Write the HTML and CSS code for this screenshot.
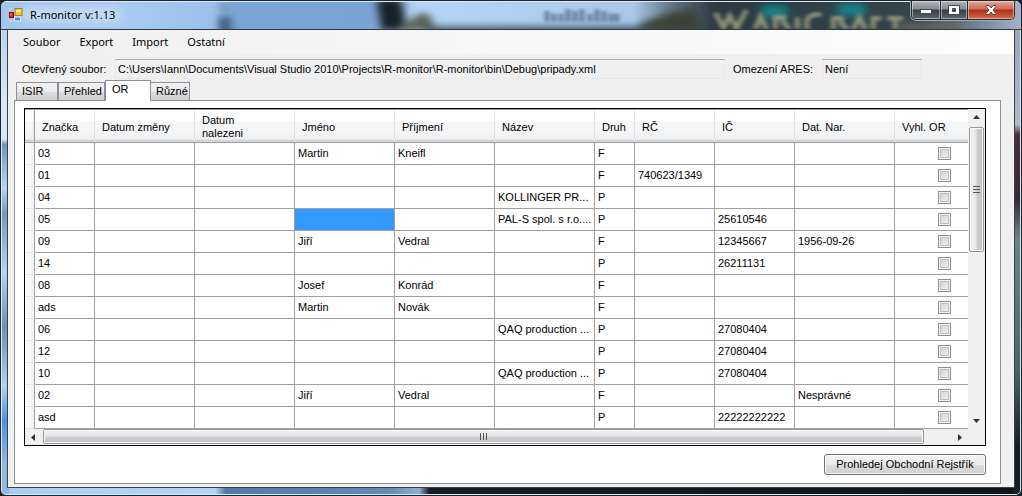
FILE: index.html
```html
<!DOCTYPE html>
<html lang="cs">
<head>
<meta charset="utf-8">
<title>R-monitor v:1.13</title>
<link rel="stylesheet" href="styles.css">
</head>
<body>
<div class="window">
  <header class="titlebar">
    <svg class="backdrop" viewBox="0 0 1022 30" preserveAspectRatio="none" aria-hidden="true">
      <defs>
        <linearGradient id="sky" x1="0" x2="1" y1="0" y2="0">
          <stop offset="0" stop-color="#a3c6ed"/><stop offset=".12" stop-color="#a9cbf0"/>
          <stop offset=".21" stop-color="#9cc0ea"/><stop offset=".23" stop-color="#7ba5d5"/>
          <stop offset=".36" stop-color="#78a3d3"/><stop offset=".41" stop-color="#b5d6f8"/>
          <stop offset=".62" stop-color="#a9c8e8"/><stop offset=".66" stop-color="#5c7080"/>
          <stop offset=".7" stop-color="#2c3b42"/><stop offset=".9" stop-color="#34454c"/>
          <stop offset=".97" stop-color="#8291a4"/><stop offset="1" stop-color="#a5b4c8"/>
        </linearGradient>
        <filter id="soft" x="-20%" y="-80%" width="140%" height="260%"><feGaussianBlur stdDeviation="4"/></filter>
        <filter id="haze" x="-20%" y="-80%" width="140%" height="260%"><feGaussianBlur stdDeviation="2"/></filter>
      </defs>
      <rect width="1022" height="30" fill="url(#sky)"/>
      <g filter="url(#soft)">
        <rect x="20" y="6" width="100" height="16" rx="8" fill="#c4dbf3"/>
        <rect x="218" y="16" width="13" height="20" fill="#3d5c81"/>
        <rect x="220" y="2" width="8" height="8" fill="#6488b0"/>
        <path d="M376 -4h25l6 36h-26z" fill="#16232c"/>
        <path d="M396 32l24-20 9 2 8 18z" fill="#5a6355"/>
        <path d="M425 27h235v8H425z" fill="#3c5163"/>
        <path d="M640 24l30-12 26-4 8 26h-64z" fill="#3c4238"/>
        <path d="M762 4h26v14h-26zM838 2h28v14h-28z" fill="#138088"/>
        <path d="M900 24h60v8h-60z" fill="#6c675c"/>
      </g>
      <path d="M547 10v12M554 13v9M561 13v9M568 8v14M575 10v12M582 8v14M590 13v9M597 8v14M604 10v12M611 13v9M617 13v9" stroke="#435a73" stroke-width="4" opacity=".8" filter="url(#haze)"/>
      <g fill="none" stroke="#a6a583" stroke-width="5" opacity=".8" filter="url(#haze)">
        <path d="M716 12l8 17 6-14 7 14 10-20M756 30l5-14 6 14M776 30v-13h8v6l6 7M798 30V17M822 14q-18-2-14 16M834 30v-12h8v6l6 6M854 30l6-13 6 13M874 30v-12h8M888 18h16M896 18v12"/>
      </g>
    </svg>
    <svg class="app-icon" viewBox="0 0 14 14" aria-hidden="true">
      <path d="M0 3V0h3M0 11v2h3" fill="none" stroke="#d9dfe6"/>
      <rect x="6" y=".5" width="7" height="7" fill="#f6c52d" stroke="#b77a10"/>
      <path d="M7 2h5v2H7z" fill="#fff0a0"/>
      <rect x=".5" y="4.500" width="4" height="5" fill="#d92b18" stroke="#8b1109"/>
      <path d="M1.500 5.500h1v2h-1z" fill="#ff9b8c"/>
      <rect x="5.500" y="9" width="6" height="4" fill="#438ee8" stroke="#e6f0fa"/>
    </svg>
    <h1 class="title">R-monitor v:1.13</h1>
    <div class="caption-buttons">
      <button class="caption" aria-label="Minimalizovat"><svg viewBox="0 0 14 12"><rect x="1.500" y="5.500" width="11" height="4" fill="#fff" stroke="#444b55"/></svg></button>
      <button class="caption maximize" aria-label="Maximalizovat"><svg viewBox="0 0 14 12"><path fill-rule="evenodd" d="M1.500 1.500h11v9h-11zM5.500 4.500h3v3h-3z" fill="#fff" stroke="#444b55"/></svg></button>
      <button class="caption close" aria-label="Zavřít"><svg viewBox="0 0 14 12"><path d="M2 1.500h3l2 2.500 2-2.500h3l.5.5-3.500 4 3.500 4-.5.500h-3L7 8l-2 2.500H2l-.5-.5L5 6 1.500 2z" fill="#fff" stroke="#5d4346"/></svg></button>
    </div>
  </header>

  <main class="client">
    <nav class="menu">
      <button>Soubor</button><button>Export</button><button>Import</button><button>Ostatní</button>
    </nav>
    <div class="fields">
      <label for="file">Otevřený soubor:</label>
      <input id="file" class="file" readonly value="C:\Users\Iann\Documents\Visual Studio 2010\Projects\R-monitor\R-monitor\bin\Debug\pripady.xml">
      <label for="ares">Omezení ARES:</label>
      <input id="ares" class="ares" readonly value="Není">
    </div>
    <div class="tabs" role="tablist">
      <button class="tab isir" role="tab">ISIR</button>
      <button class="tab prehled" role="tab">Přehled</button>
      <button class="tab active" role="tab" aria-selected="true">OR</button>
      <button class="tab ruzne" role="tab">Různé</button>
    </div>
    <section class="page">
      <div class="grid">
        <div class="viewport">
          <table>
            <colgroup><col class="w-head"><col class="w-mark"><col class="w-text"><col class="w-text"><col class="w-text"><col class="w-text"><col class="w-text"><col class="w-kind"><col class="w-id"><col class="w-id"><col class="w-text"><col class="w-text"></colgroup>
            <thead><tr><th></th><th>Značka</th><th>Datum změny</th><th>Datum<br>nalezeni</th><th>Jméno</th><th>Příjmení</th><th>Název</th><th>Druh</th><th>RČ</th><th>IČ</th><th>Dat. Nar.</th><th>Vyhl. OR</th></tr></thead>
            <tbody id="rows"></tbody>
          </table>
        </div>
        <div class="vscroll">
          <svg class="arrow" viewBox="0 0 17 17"><path d="M5 10l3.500-4 3.500 4z" fill="#333"/></svg>
          <div class="vthumb"><svg viewBox="0 0 9 9"><path d="M1 1.500h7M1 4.500h7M1 7.500h7" stroke="#555"/></svg></div>
          <svg class="arrow" viewBox="0 0 17 17"><path d="M5 7l3.500 4 3.500-4z" fill="#333"/></svg>
        </div>
        <div class="hscroll">
          <svg class="arrow" viewBox="0 0 17 17"><path d="M10 5L6 8.500l4 3.500z" fill="#333"/></svg>
          <div class="hthumb"><svg viewBox="0 0 9 9"><path d="M1.500 1v7M4.500 1v7M7.500 1v7" stroke="#555"/></svg></div>
          <svg class="arrow" viewBox="0 0 17 17"><path d="M7 5l4 3.500-4 3.500z" fill="#333"/></svg>
        </div>
        <div class="corner"></div>
      </div>
      <div class="actions"><button class="search">Prohledej Obchodní Rejstřík</button></div>
    </section>
  </main>
</div>
<script src="rows.js"></script>
</body>
</html>
```

FILE: styles.css
```css
* { box-sizing: border-box; }
body { margin: 0; background: #17202a; font: 11px/13px "Liberation Sans", Arial, sans-serif; color: #000; }
button, input { font: inherit; color: inherit; margin: 0; }
.window {
  position: relative; display: flex; flex-direction: column; height: 100vh; padding: 0 7px 7px;
  border: 1px solid #20252c; border-radius: 7px 7px 6px 6px; overflow: hidden;
  background:
    linear-gradient(180deg, #94a2b3 0, #b2bac4 25%, #4b3038 27%, #382830 40%, #708386 48%, #4f6266 75%, #151d20 90%) right / 8px 100% no-repeat,
    linear-gradient(180deg, #a9c8e9 0, #dbe6f2 20%, #dbe6f2 28%, #7095bd 29%, #b5d6f7 38%, #7898be 43%, #b2d4f5 55%, #718fae 66%, #aed1f4 78%, #4c93d8 85%, #94b9df 94%) left / 8px 100% no-repeat,
    linear-gradient(90deg, #a9cdf2 0, #b2d5f8 21%, #527aa9 22%, #638ab5 38%, #8eafd0 41%, #151d20 42%, #101618 100%);
  box-shadow: inset 0 0 0 1px #d6e7f7;
}
.titlebar { position: relative; display: flex; align-items: center; height: 29px; flex: none; margin: 0 -7px; padding-left: 8px; border-bottom: 1px solid #303840; }
.backdrop { position: absolute; inset: 0; width: 100%; height: 100%; border-top: 1px solid #dcebf9; }
.app-icon { position: relative; width: 14px; height: 14px; }
.title { position: relative; margin: 0 0 0 7px; font: 11px/16px "Noto Sans", "Open Sans", sans-serif; flex: 1; }
.caption-buttons { position: relative; display: flex; align-self: flex-start; height: 19px; margin-right: 6px; border: 1px solid #252b31; border-top: 0; border-radius: 0 0 5px 5px; overflow: hidden; box-shadow: 0 0 0 1px #a3abb3; }
.caption { display: flex; align-items: center; justify-content: center; width: 29px; padding: 0; border: 0; border-right: 1px solid #252b31; background: linear-gradient(#b0b4b8 0, #828b91 45%, #343d43 50%, #5d6b70 100%); box-shadow: inset 0 0 0 1px #ffffff70; }
.maximize { width: 27px; }
.caption svg { width: 14px; height: 12px; }
.close { width: 46px; border-right: 0; background: linear-gradient(#e4aa9c 0, #cd6955 45%, #ad2e18 50%, #d66b45 100%); }

.client { display: flex; flex-direction: column; flex: 1; min-height: 0; margin: 0 -1px; border: 1px solid #39424b; border-top: 0; background: #f0f0f0; }
.menu { display: flex; height: 24px; flex: none; padding-left: 9px; background: linear-gradient(90deg, #f0f0f0, #fdfdfd); }
.menu button { border: 0; padding: 0 6px; margin-right: 7px; background: none; font: 11px/16px "Noto Sans", "Open Sans", sans-serif; }
.fields { display: flex; align-items: center; height: 20px; margin: 5px 92px 0 14px; flex: none; }
.fields label { width: 93px; }
.fields input { height: 20px; padding: 0 2px 1px; border: 1px solid #e3e9ef; border-top-color: #abadb3; background: #f0f0f0; outline: 0; }
.fields .file { flex: 1; min-width: 0; margin-right: 8px; }
.fields .ares { width: 100px; }
.fields label:nth-of-type(2) { width: 89px; }

.tabs { display: flex; align-items: flex-end; height: 21px; flex: none; margin-left: 8px; }
.tab { height: 18px; padding: 0 5px; border: 1px solid #8c8e99; border-bottom: 0; background: linear-gradient(#f2f2f2 0, #ebebeb 50%, #ddd 51%, #cfcfcf 100%); text-align: left; }
.isir { width: 42px; }
.prehled { width: 47px; }
.tab.active { position: relative; width: 46px; height: 21px; margin-bottom: -1px; padding: 0 6px 3px; background: #fff; }
.ruzne { width: 39px; border-left: 0; }
.page { display: flex; flex-direction: column; flex: 1; min-height: 0; margin: 0 13px 3px 6px; padding: 7px 14px 8px 9px; border: 1px solid #8c8e99; background: #fff; }
.grid { display: grid; grid-template: minmax(0, 1fr) 16px / minmax(0, 1fr) 17px; flex: 1; min-height: 0; border: 1px solid #000; background: #f0f0f0; }
.viewport { overflow: hidden; background: #fff; }
table { width: 970px; border-collapse: separate; border-spacing: 0; table-layout: fixed; }
.w-head { width: 10px; } .w-mark { width: 60px; } .w-text { width: 100px; } .w-kind { width: 40px; } .w-id { width: 80px; }
th { height: 34px; padding: 2px 7px 0; border-top: 1px solid #a0a0a0; border-bottom: 1px solid #a0a0a0; font-weight: 400; text-align: left; vertical-align: middle;
  background: linear-gradient(#e3e4e6, #e3e4e6) right / 1px 100% no-repeat, linear-gradient(#fff 0, #fff 33%, #f7f8fa 34%, #f1f2f4 90%, #d5d5d5 95%); }
td { height: 22px; padding: 0 0 0 3px; border: solid #a0a0a0; border-width: 0 1px 1px 0; overflow: hidden; white-space: nowrap; }
th:first-child { border-right: 1px solid #a0a0a0; padding: 0; }
td:first-child { padding: 0; border-bottom-color: #e3e4e6; background: linear-gradient(90deg, #fff, #f1f2f4); }
.selected { background: #39f; }
td.check { padding: 0; }
.check input { appearance: none; display: block; width: 13px; height: 13px; margin: 0 auto; border: 1px solid #8e8f8f; background: linear-gradient(135deg, #cbcfd5, #f6f6f6); box-shadow: inset 0 0 0 1px #f4f4f4, inset 0 0 0 2px #bcc0c5; }
.vscroll { display: flex; flex-direction: column; background: #f0f0f0; }
.hscroll { display: flex; background: #f0f0f0; }
.arrow { width: 17px; height: 17px; flex: none; }
.vthumb, .hthumb { display: flex; align-items: center; justify-content: center; border: 1px solid #979797; border-radius: 2px; box-shadow: inset 0 0 0 1px #f8f8f8; }
.vthumb { width: 15px; margin: 1px 1px auto; height: 39%; background: linear-gradient(90deg, #f4f4f4 0, #e4e5e7 48%, #cfd0d3 52%, #bfc0c4 100%); }
.hthumb { flex: 1; height: 15px; margin: 0 27px 0 1px; background: linear-gradient(#f4f4f4 0, #e4e5e7 48%, #cfd0d3 52%, #bfc0c4 100%); }
.vthumb svg, .hthumb svg { width: 9px; height: 9px; }
.actions { display: flex; justify-content: flex-end; margin-top: 8px; flex: none; }
.search { width: 162px; height: 21px; padding: 0; border: 1px solid #707070; border-radius: 3px; background: linear-gradient(#f2f2f2 0, #ebebeb 50%, #ddd 51%, #cfcfcf 100%); box-shadow: inset 0 0 0 1px #fbfbfb; }
```

FILE: rows.js
```js
const columns = ["mark", "changed", "found", "first", "last", "name", "kind", "rc", "ic", "born"];
const records = [
  { mark: "03", first: "Martin", last: "Kneifl", kind: "F" },
  { mark: "01", kind: "F", rc: "740623/1349" },
  { mark: "04", name: "KOLLINGER PR...", kind: "P" },
  { mark: "05", name: "PAL-S spol. s r.o....", kind: "P", ic: "25610546", selected: "first" },
  { mark: "09", first: "Jiří", last: "Vedral", kind: "F", ic: "12345667", born: "1956-09-26" },
  { mark: "14", kind: "P", ic: "26211131" },
  { mark: "08", first: "Josef", last: "Konrád", kind: "F" },
  { mark: "ads", first: "Martin", last: "Novák", kind: "F" },
  { mark: "06", name: "QAQ production ...", kind: "P", ic: "27080404" },
  { mark: "12", kind: "P", ic: "27080404" },
  { mark: "10", name: "QAQ production ...", kind: "P", ic: "27080404" },
  { mark: "02", first: "Jiří", last: "Vedral", kind: "F", born: "Nesprávné" },
  { mark: "asd", kind: "P", ic: "22222222222" }
];
const body = document.getElementById("rows");
for (const record of records) {
  const row = body.insertRow();
  row.insertCell();
  for (const key of columns) {
    const cell = row.insertCell();
    cell.textContent = record[key] || "";
    if (record.selected === key) cell.className = "selected";
  }
  const check = row.insertCell();
  check.className = "check";
  const box = document.createElement("input");
  box.type = "checkbox";
  box.setAttribute("aria-label", "Vyhl. OR " + record.mark);
  check.append(box);
}
```
